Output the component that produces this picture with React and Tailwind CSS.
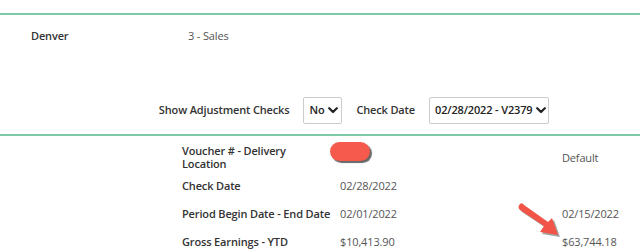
import React from "react";

const Chevron = () => (
  <svg width="10" height="7" viewBox="0 0 10 7" className="ml-[4px] shrink-0">
    <path d="M1.2 1.2 L5 5 L8.8 1.2" fill="none" stroke="#222" strokeWidth="2.2" strokeLinecap="round" strokeLinejoin="round" />
  </svg>
);

export default function App() {
  return (
    <div
      className="relative w-[640px] h-[251px] bg-white overflow-hidden text-[11px] tracking-[-0.15px] text-[#333]"
      style={{ fontFamily: '"Open Sans", "Liberation Sans", sans-serif' }}
    >
      <div className="h-[13px]" />
      <div className="h-[2px] bg-[#7ecba8]" />
      <div className="flex pl-[31px] pt-[13px] h-[45px]">
        <div className="w-[157px] font-semibold text-[#333]">Denver</div>
        <div className="text-[#555]">3 - Sales</div>
      </div>
      <div className="flex items-center justify-end pr-[91px] mt-[37px] h-[27px] whitespace-nowrap">
        <span className="font-semibold mr-[14px]">Show Adjustment Checks</span>
        <div className="flex items-center shrink-0 h-[27px] w-[39px] border border-[#ccc] rounded-[2px] pl-[5px] font-semibold text-[#222] mr-[14px]">
          No
          <Chevron />
        </div>
        <span className="font-semibold mr-[14px]">Check Date</span>
        <div className="flex items-center shrink-0 h-[27px] w-[120px] border border-[#ccc] rounded-[2px] pl-[5px] font-semibold text-[#222]">
          02/28/2022 - V2379
          <Chevron />
        </div>
      </div>
      <div className="h-[10px]" />
      <div className="h-[2px] bg-[#7ecba8]" />
      <div className="grid grid-cols-[182px_158px_222px_1fr] text-[#555]">
        <div />
        <div className="font-semibold text-[#333] leading-[13px] pt-[8px] h-[38px]">
          <div>Voucher # - Delivery</div>
          <div>Location</div>
        </div>
        <div className="pt-[6px]">
          <div className="ml-[-10px] w-[40px] h-[19px] rounded-full bg-[#f65a4c] shadow-[2px_2px_1px_rgba(0,0,0,0.6)]" />
        </div>
        <div className="pt-[14px]">Default</div>

        <div />
        <div className="font-semibold text-[#333] h-[28px] pt-[4px]">Check Date</div>
        <div className="pt-[4px]">02/28/2022</div>
        <div />

        <div />
        <div className="font-semibold text-[#333] h-[28px] pt-[4px] whitespace-nowrap">Period Begin Date - End Date</div>
        <div className="pt-[4px]">02/01/2022</div>
        <div className="pt-[4px]">02/15/2022</div>

        <div />
        <div className="font-semibold text-[#333] h-[28px] pt-[4px]">Gross Earnings - YTD</div>
        <div className="pt-[4px]">$10,413.90</div>
        <div className="pt-[4px]">$63,744.18</div>
      </div>
      <svg className="absolute left-[512px] top-[198px]" width="52" height="44" viewBox="0 0 52 44">
        <g transform="translate(2,2)" fill="#333" opacity="0.45">
          <path d="M8 6 Q5 9 8 12 L32 28 L28 34 L46 37 L40 20 L36 24 L12 7 Q10 4 8 6 Z" />
        </g>
        <path d="M8 6 Q5 9 8 12 L32 28 L28 34 L46 37 L40 20 L36 24 L12 7 Q10 4 8 6 Z" fill="#f25447" />
      </svg>
    </div>
  );
}
